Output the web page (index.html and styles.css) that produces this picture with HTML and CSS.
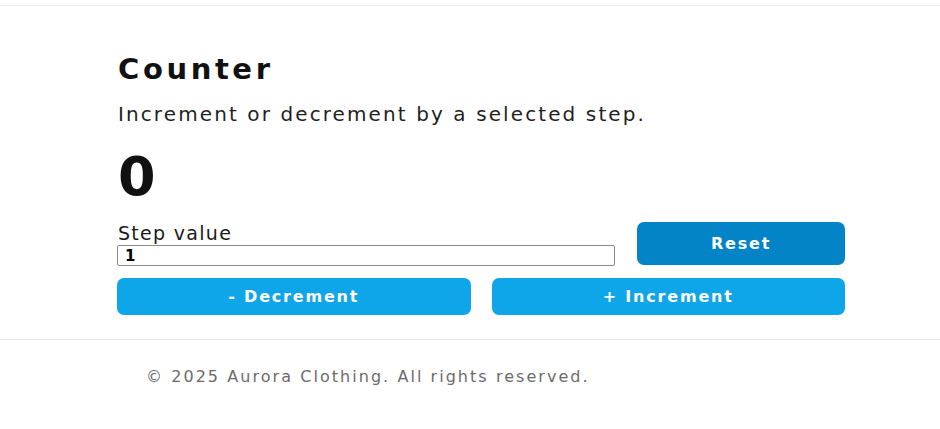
FILE: index.html
```html
<!DOCTYPE html>
<html lang="en">
<head>
<meta charset="utf-8">
<title>Counter</title>
<link rel="stylesheet" href="styles.css">
</head>
<body>
<header class="topbar"></header>
<main class="main">
  <section class="counter">
    <h1 class="title">Counter</h1>
    <p class="desc">Increment or decrement by a selected step.</p>
    <div class="value">0</div>
    <div class="row-top">
      <div class="field">
        <label class="label" for="step">Step value</label>
        <input class="input" id="step" type="text" value="1">
      </div>
      <button class="btn btn-reset" type="button">Reset</button>
    </div>
    <div class="row-bottom">
      <button class="btn" type="button">- Decrement</button>
      <button class="btn" type="button">+ Increment</button>
    </div>
  </section>
</main>
<footer class="footer">
  <p class="copy">© 2025 Aurora Clothing. All rights reserved.</p>
</footer>
</body>
</html>
```
FILE: styles.css
```css
* { box-sizing: border-box; }
html, body { margin: 0; padding: 0; background: #ffffff; }
body {
  font-family: "DejaVu Sans", Verdana, sans-serif;
  color: #111111;
}
.topbar {
  height: 6px;
  border-bottom: 1px solid #eceef3;
}
.main {
  padding: 47px 0 24px 117px;
  border-bottom: 1px solid #e6e6e6;
}
.counter {
  width: 728px;
}
.title {
  margin: 0;
  font-size: 29px;
  line-height: 32px;
  font-weight: 700;
  letter-spacing: 3.6px;
  padding-left: 1px;
  color: #111111;
}
.desc {
  margin: 17px 0 0;
  font-size: 20px;
  line-height: 24px;
  letter-spacing: 2.1px;
  padding-left: 1px;
  color: #1f1f1f;
}
.value {
  margin-top: 22px;
  font-size: 54px;
  line-height: 57px;
  font-weight: 700;
  letter-spacing: 2px;
  padding-left: 1px;
  color: #111111;
}
.row-top {
  margin-top: 17px;
  display: flex;
  gap: 22px;
}
.field {
  flex: 1;
  display: flex;
  flex-direction: column;
}
.label {
  font-size: 19px;
  line-height: 22px;
  letter-spacing: 1.3px;
  padding-left: 1px;
  color: #1a1a1a;
}
.input {
  margin-top: 1px;
  height: 21px;
  width: 100%;
  border: 1px solid #8c8c8c;
  border-radius: 2px;
  padding: 0 7px;
  font-family: "DejaVu Sans", Verdana, sans-serif;
  font-size: 15px;
  font-weight: 600;
  color: #000;
  background: #fff;
}
.btn {
  border: none;
  border-radius: 7px;
  background: #0ea5e9;
  color: #ffffff;
  font-family: "DejaVu Sans", Verdana, sans-serif;
  font-size: 16px;
  font-weight: 700;
  letter-spacing: 1.8px;
  height: 37px;
  padding: 0;
}
.btn-reset {
  width: 208px;
  height: 43px;
  background: #0284c7;
}
.row-bottom {
  margin-top: 12px;
  display: grid;
  grid-template-columns: 1fr 1fr;
  gap: 21px;
}
.footer {
  padding: 27px 0 0 146px;
}
.copy {
  margin: 0;
  font-size: 16px;
  line-height: 20px;
  letter-spacing: 2.05px;
  color: #6b6b6b;
}
```
